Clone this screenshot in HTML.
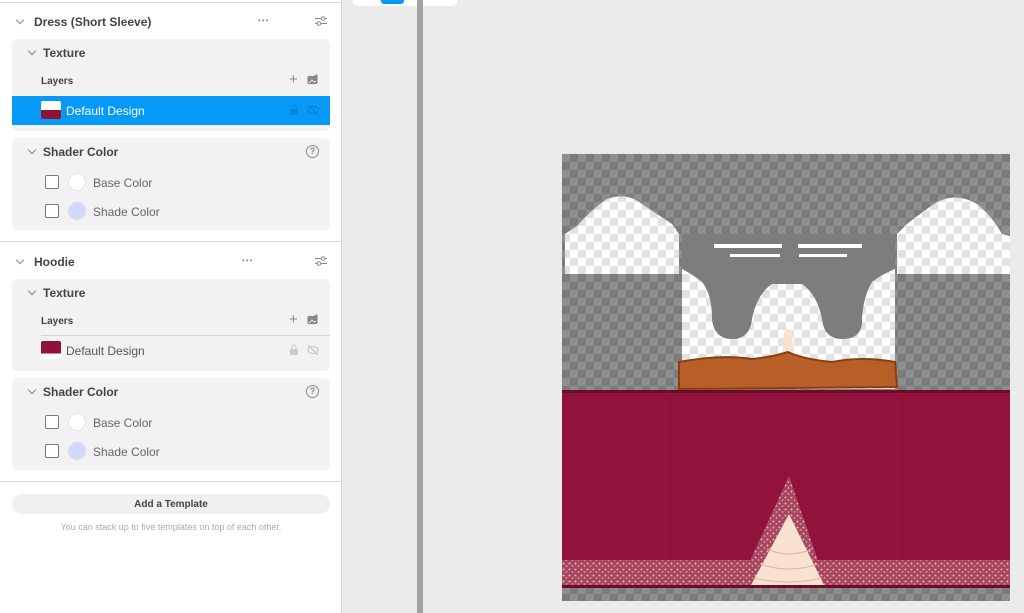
<!DOCTYPE html>
<html><head><meta charset="utf-8"><style>
*{box-sizing:border-box;margin:0;padding:0}
body{width:1024px;height:613px;overflow:hidden;background:#ebebeb;font-family:"Liberation Sans",sans-serif;position:relative;color:#333}
#panel{position:absolute;left:0;top:0;width:342px;height:613px;background:#fff;border-right:1px solid #d8d8d8}
.card{position:absolute;left:12px;width:318px;background:#f2f2f2;border-radius:6px}
.t{position:absolute;font-size:12px}
.b{font-weight:bold;color:#444}
.chev{position:absolute;width:6px;height:6px;border-right:1.2px solid #888;border-bottom:1.2px solid #888;transform:rotate(45deg)}
.cb{position:absolute;width:14px;height:14px;border:1.3px solid #777;border-radius:2px;background:#fff}
.circ{position:absolute;width:18px;height:18px;border-radius:50%}
.sep{position:absolute;left:0;width:342px;height:1px;background:#dedede}
.dots{position:absolute;font-size:8px;color:#999;letter-spacing:1px}
</style></head><body>
<div id="panel">
 <div class="sep" style="top:2px"></div>
 <div class="chev" style="left:17px;top:17px"></div>
 <div class="t b" style="left:34px;top:15px;color:#444">Dress (Short Sleeve)</div>
 <div class="dots" style="left:258px;top:16px">•••</div>
 <svg style="position:absolute;left:315px;top:16px" width="12" height="10"><path d="M0 2.5H12M0 7.5H12" stroke="#888" stroke-width="1"/><circle cx="8" cy="2.5" r="1.8" fill="#fff" stroke="#888"/><circle cx="4" cy="7.5" r="1.8" fill="#fff" stroke="#888"/></svg>
 <div class="card" style="top:39px;height:92px"></div>
 <div class="chev" style="left:29px;top:48px"></div>
 <div class="t b" style="left:43px;top:46px">Texture</div>
 <div class="t b" style="left:41px;top:76px;font-size:10px">Layers</div>
 <div class="t" style="left:289px;top:71px;font-size:15px;color:#888">+</div>
 <svg style="position:absolute;left:307px;top:74px" width="12" height="11"><rect x="0.5" y="2" width="10" height="8" rx="1.5" fill="#888"/><path d="M9 0v4M7 2h4" stroke="#888"/><path d="M2 9l3-3 2 2 2-1" stroke="#ddd" fill="none"/></svg>
 <div style="position:absolute;left:12px;top:96px;width:318px;height:29px;background:#0699f8"></div>
 <div style="position:absolute;left:41px;top:101px;width:20px;height:18px;border-radius:2px;background:linear-gradient(#fff 50%,#8f1237 50%)"></div>
 <div class="t" style="left:66px;top:104px;color:#fff">Default Design</div>
 <svg style="position:absolute;left:289px;top:104px" width="30" height="12"><rect x="1" y="5" width="8" height="6" rx="1" fill="#0a82d4"/><path d="M3 5V3a2 2 0 0 1 4 0v2" stroke="#0a82d4" fill="none"/><ellipse cx="24" cy="6" rx="5" ry="3.5" fill="none" stroke="#0a82d4" stroke-width="1.3"/><path d="M19 1l10 10" stroke="#0a82d4" stroke-width="1.3"/></svg>
 <div class="card" style="top:138px;height:92px"></div>
 <div class="chev" style="left:29px;top:147px"></div>
 <div class="t b" style="left:43px;top:145px">Shader Color</div>
 <div style="position:absolute;left:306px;top:145px;width:13px;height:13px;border:1.3px solid #888;border-radius:50%;font-size:9px;color:#888;text-align:center;line-height:11px;font-weight:bold">?</div>
 <div class="cb" style="left:45px;top:175px"></div>
 <div class="circ" style="left:68px;top:173px;background:#fff;border:1px solid #e4e4e4"></div>
 <div class="t" style="left:93px;top:176px;color:#666">Base Color</div>
 <div class="cb" style="left:45px;top:204px"></div>
 <div class="circ" style="left:68px;top:202px;background:#d3d8f7"></div>
 <div class="t" style="left:93px;top:205px;color:#666">Shade Color</div>
 <div class="sep" style="top:241px"></div>
 <div class="chev" style="left:17px;top:257px"></div>
 <div class="t b" style="left:34px;top:255px">Hoodie</div>
 <div class="dots" style="left:242px;top:256px">•••</div>
 <svg style="position:absolute;left:315px;top:256px" width="12" height="10"><path d="M0 2.5H12M0 7.5H12" stroke="#888" stroke-width="1"/><circle cx="8" cy="2.5" r="1.8" fill="#fff" stroke="#888"/><circle cx="4" cy="7.5" r="1.8" fill="#fff" stroke="#888"/></svg>
 <div class="card" style="top:279px;height:92px"></div>
 <div class="chev" style="left:29px;top:288px"></div>
 <div class="t b" style="left:43px;top:286px">Texture</div>
 <div class="t b" style="left:41px;top:316px;font-size:10px">Layers</div>
 <div class="t" style="left:289px;top:311px;font-size:15px;color:#888">+</div>
 <svg style="position:absolute;left:307px;top:314px" width="12" height="11"><rect x="0.5" y="2" width="10" height="8" rx="1.5" fill="#888"/><path d="M9 0v4M7 2h4" stroke="#888"/><path d="M2 9l3-3 2 2 2-1" stroke="#ddd" fill="none"/></svg>
 <div style="position:absolute;left:41px;top:335px;width:289px;height:1px;background:#d6d6d6"></div>
 <div style="position:absolute;left:41px;top:341px;width:20px;height:18px;border-radius:2px;background:linear-gradient(#8f1237 70%,#fff 70%)"></div>
 <div class="t" style="left:66px;top:344px;color:#555">Default Design</div>
 <svg style="position:absolute;left:289px;top:344px" width="30" height="12"><rect x="1" y="5" width="8" height="6" rx="1" fill="#ccc"/><path d="M3 5V3a2 2 0 0 1 4 0v2" stroke="#ccc" fill="none"/><ellipse cx="24" cy="6" rx="5" ry="3.5" fill="none" stroke="#ccc" stroke-width="1.3"/><path d="M19 1l10 10" stroke="#ccc" stroke-width="1.3"/></svg>
 <div class="card" style="top:378px;height:92px"></div>
 <div class="chev" style="left:29px;top:387px"></div>
 <div class="t b" style="left:43px;top:385px">Shader Color</div>
 <div style="position:absolute;left:306px;top:385px;width:13px;height:13px;border:1.3px solid #888;border-radius:50%;font-size:9px;color:#888;text-align:center;line-height:11px;font-weight:bold">?</div>
 <div class="cb" style="left:45px;top:415px"></div>
 <div class="circ" style="left:68px;top:413px;background:#fff;border:1px solid #e4e4e4"></div>
 <div class="t" style="left:93px;top:416px;color:#666">Base Color</div>
 <div class="cb" style="left:45px;top:444px"></div>
 <div class="circ" style="left:68px;top:442px;background:#d3d8f7"></div>
 <div class="t" style="left:93px;top:445px;color:#666">Shade Color</div>
 <div class="sep" style="top:481px"></div>
 <div style="position:absolute;left:12px;top:494px;width:318px;height:20px;border-radius:10px;background:#f0f0f0;font-size:10px;font-weight:bold;color:#444;text-align:center;line-height:21px">Add a Template</div>
 <div class="t" style="left:0;width:342px;text-align:center;top:522px;font-size:9px;color:#aaa">You can stack up to five templates on top of each other.</div>
</div>
<div style="position:absolute;left:353px;top:-6px;width:104px;height:12px;background:#fff;border-radius:5px"></div>
<div style="position:absolute;left:381px;top:-4px;width:23px;height:8px;background:#0699f8;border-radius:3px"></div>
<div style="position:absolute;left:417px;top:0;width:6px;height:613px;background:#a3a3a3"></div>
<svg style="position:absolute;left:562px;top:154px" width="448" height="447" viewBox="0 0 448 447">
 <defs>
  <pattern id="dk" width="16" height="16" patternUnits="userSpaceOnUse"><rect width="16" height="16" fill="#7c7c7c"/><rect width="8" height="8" fill="#8e8e8e"/><rect x="8" y="8" width="8" height="8" fill="#8e8e8e"/></pattern>
  <pattern id="lt" width="16" height="16" patternUnits="userSpaceOnUse"><rect width="16" height="16" fill="#fff"/><rect width="8" height="8" fill="#e2e2e2"/><rect x="8" y="8" width="8" height="8" fill="#e2e2e2"/></pattern>
  <pattern id="lace" width="6" height="6" patternUnits="userSpaceOnUse"><rect width="6" height="6" fill="#a8465f"/><circle cx="1.5" cy="1.5" r="1" fill="#e0b8c2"/><circle cx="4.5" cy="4" r="0.9" fill="#d7a2b1"/></pattern>
 </defs>
 <rect width="448" height="447" fill="url(#dk)"/>
 <path d="M3 80 L15 72 Q30 55 45 45 Q65 38 80 50 Q95 60 110 70 L117 80 L117 120 L3 120Z" fill="url(#lt)"/>
 <path d="M335 80 L345 70 Q360 58 375 48 Q395 38 415 50 Q430 62 440 80 L448 82 L448 120 L335 120Z" fill="url(#lt)"/>
 <rect x="120" y="115" width="213" height="120" fill="url(#lt)"/>
 <path d="M120 80 L333 80 L333 115 Q320 120 310 128 Q300 145 300 170 Q298 185 280 185 Q262 185 260 165 Q255 140 240 130 L210 130 Q195 140 190 165 Q188 185 170 185 Q152 185 150 165 Q150 140 140 128 Q130 120 120 115Z" fill="#7d7d7d"/>
 <g fill="#fff"><rect x="152" y="90" width="68" height="4"/><rect x="236" y="90" width="64" height="4"/><rect x="168" y="100" width="50" height="3"/><rect x="237" y="100" width="48" height="3"/></g>
 <path d="M222 178 Q226 172 230 178 L232 205 L220 205Z" fill="#f7e3cf"/>
 <path d="M117 208 Q160 200 190 205 Q210 203 226 198 Q240 205 270 208 Q300 202 333 208 L335 233 L117 235Z" fill="#b75f26" stroke="#8a3f12" stroke-width="2"/>
 <rect x="0" y="236" width="448" height="198" fill="#91133c"/>
 <rect x="0" y="236" width="448" height="3" fill="#6e0b2c"/>
 <g stroke="#7a0d32" stroke-width="1" opacity=".6"><path d="M108 240V430M222 240V430M340 240V430"/></g>
 <rect x="0" y="406" width="448" height="27" fill="url(#lace)"/>
 <path d="M227 322 L176 433 L265 433Z" fill="url(#lace)"/>
 <path d="M227 360 L188 433 L263 433Z" fill="#f9e2d0"/>
 <g stroke="#e3b393" fill="none"><path d="M205 395 Q227 405 250 395M198 410 Q227 420 256 410M192 424 Q227 432 260 424"/></g>
 <rect x="0" y="431" width="448" height="3" fill="#6e0b2c"/>
</svg>
</body></html>
